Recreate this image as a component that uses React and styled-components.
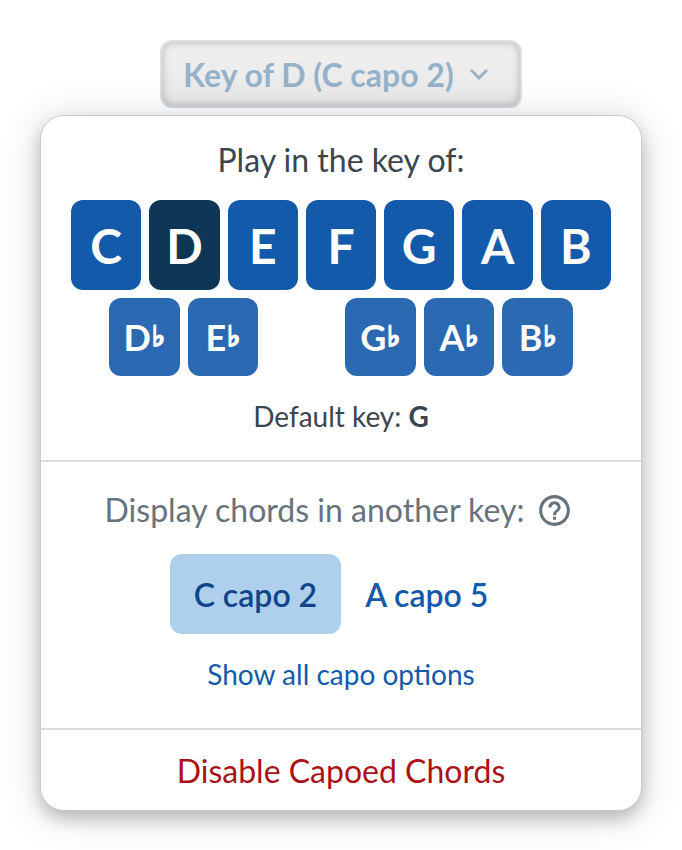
import React, { useState } from 'react';
import styled, { createGlobalStyle } from 'styled-components';
import { MdOutlineHelpOutline } from 'react-icons/md';

const GlobalStyle = createGlobalStyle`
  *, *::before, *::after {
    box-sizing: border-box;
  }

  body {
    margin: 0;
    background: #ffffff;
    font-family: Lato, 'Liberation Sans', sans-serif;
    color: #3b454e;
  }

  button {
    font-family: inherit;
    cursor: pointer;
  }
`;

const Page = styled.main`
  display: flex;
  flex-direction: column;
  align-items: center;
  gap: 7px;
  padding: 40px;
`;

const KeyButton = styled.button`
  display: flex;
  align-items: center;
  gap: 16px;
  height: 68px;
  padding: 0 32px 0 21px;
  border: 2px solid #dcdedf;
  border-bottom-color: #ccd6e1;
  border-radius: 12px;
  background: linear-gradient(#f0f0f0, #e8e8e8);
  box-shadow: inset 0 0 8px rgba(0, 0, 0, 0.25);
  font-size: 32px;
  font-weight: 700;
  color: #96b2c9;
`;

const Panel = styled.section`
  width: 100%;
  max-width: 602px;
  border: 1px solid #c8cbcd;
  border-radius: 24px;
  background: #ffffff;
  box-shadow: 0 8px 16px rgba(0, 0, 0, 0.2), 0 4px 40px rgba(0, 0, 0, 0.16);
`;

const Section = styled.div`
  display: flex;
  flex-direction: column;
  align-items: center;

  & + & {
    border-top: 2px solid #d7dce0;
  }
`;

const Keys = styled(Section)`
  padding: 24px 30px;
`;

const Capo = styled(Section)`
  padding: 28px 30px 36px;
`;

const Heading = styled.h2`
  display: flex;
  align-items: center;
  gap: 12px;
  margin: 0;
  padding-right: ${p => (p.$muted ? '4px' : '0')};
  font-size: 32px;
  line-height: 40px;
  font-weight: 400;
  color: ${p => (p.$muted ? '#66727c' : '#3b454e')};
`;

const KeyRow = styled.div`
  display: flex;
  gap: 8px;
  width: 100%;
  margin-top: ${p => (p.$flat ? '8px' : '20px')};
  padding: 0 ${p => (p.$flat ? '38px' : '0')};
`;

const Key = styled.button`
  flex: 1;
  min-width: 0;
  height: ${p => (p.$flat ? '78px' : '90px')};
  padding: 0;
  border: 0;
  border-radius: 12px;
  background: ${p => (p.$active ? '#0f3654' : p.$flat ? '#2b69b3' : '#145aab')};
  font-size: ${p => (p.$flat ? '36px' : '48px')};
  font-weight: 700;
  color: #ffffff;
`;

// the flat sign has no bold face, so a stroke thickens it
const Flat = styled.span`
  padding-left: 1px;
  font-family: 'DejaVu Sans', sans-serif;
  font-size: 28px;
  line-height: 0;
  vertical-align: 5px;
  -webkit-text-stroke: 2px currentColor;
`;

const Spacer = styled.span`
  flex: 1;
`;

const DefaultKey = styled.p`
  margin: 22px 0 2px;
  font-size: 28px;
  line-height: 36px;
`;

const HelpButton = styled.button`
  display: flex;
  padding: 0;
  border: 0;
  background: none;
  font-size: 37px;
  color: #66727c;
`;

const Options = styled.div`
  display: flex;
  margin-top: 24px;
`;

const Option = styled.button`
  height: 80px;
  padding: 0 24px;
  border: 0;
  border-radius: 12px;
  background: ${p => (p.$active ? '#aed0ed' : 'transparent')};
  font-size: 32px;
  font-weight: 600;
  color: ${p => (p.$active ? '#114489' : '#145aab')};
`;

const TextButton = styled.button`
  padding: 0;
  border: 0;
  background: none;
  margin-top: 22px;
  font-size: 28px;
  line-height: 36px;
  color: #145aab;
`;

const DisableButton = styled.button`
  width: 100%;
  height: 80px;
  padding: 0;
  border: 0;
  background: none;
  font-size: 32px;
  color: #ab1218;
`;

const naturals = ['C', 'D', 'E', 'F', 'G', 'A', 'B'];
const flats = ['D', 'E', null, 'G', 'A', 'B'];
const capos = ['C capo 2', 'A capo 5'];

const Chevron = () => (
  <svg width="18" height="12" viewBox="0 0 18 12" fill="none" aria-hidden="true">
    <path d="M1 2l8 8 8-8" stroke="currentColor" strokeWidth="3" />
  </svg>
);

export default function App() {
  const [key, setKey] = useState('D');
  const [capo, setCapo] = useState('C capo 2');

  return (
    <Page>
      <GlobalStyle />
      <KeyButton type="button" aria-expanded="true">
        Key of {key} ({capo})
        <Chevron />
      </KeyButton>
      <Panel>
        <Keys>
          <Heading>Play in the key of:</Heading>
          <KeyRow>
            {naturals.map(k => (
              <Key key={k} type="button" $active={k === key} onClick={() => setKey(k)}>
                {k}
              </Key>
            ))}
          </KeyRow>
          <KeyRow $flat>
            {flats.map(k =>
              k ? (
                <Key key={k} type="button" $flat $active={`${k}♭` === key} onClick={() => setKey(`${k}♭`)}>
                  {k}
                  <Flat>♭</Flat>
                </Key>
              ) : (
                <Spacer key="gap" />
              )
            )}
          </KeyRow>
          <DefaultKey>
            Default key: <strong>G</strong>
          </DefaultKey>
        </Keys>
        <Capo>
          <Heading $muted>
            Display chords in another key:
            <HelpButton type="button" aria-label="About capo chords">
              <MdOutlineHelpOutline />
            </HelpButton>
          </Heading>
          <Options>
            {capos.map(c => (
              <Option key={c} type="button" $active={c === capo} onClick={() => setCapo(c)}>
                {c}
              </Option>
            ))}
          </Options>
          <TextButton type="button">Show all capo options</TextButton>
        </Capo>
        <Section>
          <DisableButton type="button">Disable Capoed Chords</DisableButton>
        </Section>
      </Panel>
    </Page>
  );
}
